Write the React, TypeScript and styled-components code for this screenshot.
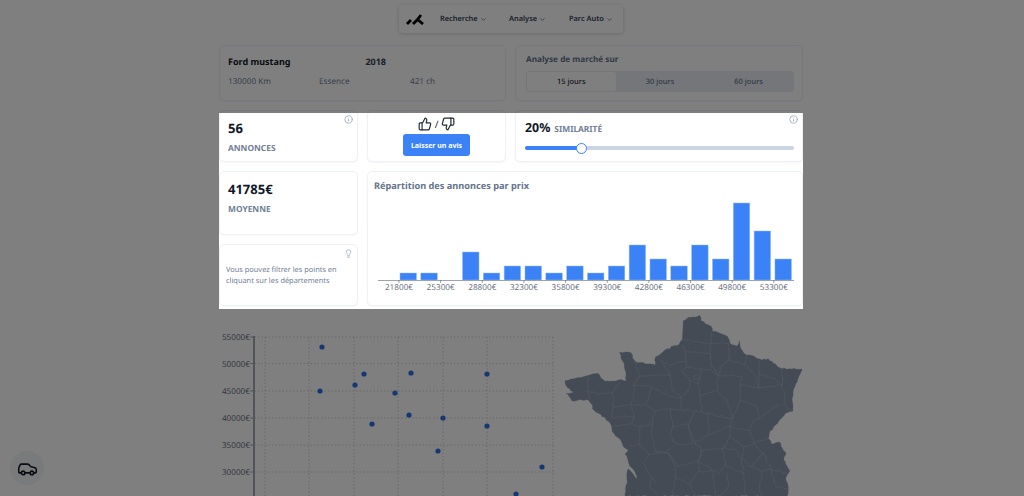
import React from 'react'
import styled, { createGlobalStyle } from 'styled-components'
import { Car, ChevronDown, Info, Lightbulb, ThumbsDown, ThumbsUp } from 'lucide-react'

const GlobalStyle = createGlobalStyle`
  html, body {
    margin: 0;
    height: 496px;
    overflow: hidden;
    background: #fff;
    font-family: 'Noto Sans', sans-serif;
    text-rendering: geometricPrecision;
  }
  * { box-sizing: border-box; }
`

const Page = styled.div`
  width: 1022px;
  height: 496px;
  overflow: hidden;
  padding-top: 5px;
`

const Nav = styled.nav`
  width: 224px;
  height: 28px;
  margin: 0 auto;
  padding: 0 7px;
  display: flex;
  align-items: center;
  background: #fff;
  border-radius: 4px;
  box-shadow: 0 1px 4px rgba(15, 23, 42, 0.18);
`

const NavItem = styled.div<{ $width: number }>`
  width: ${(p) => p.$width}px;
  display: flex;
  align-items: center;
  gap: 2px;
  font-size: 7.4px;
  font-weight: 600;
  color: #334155;
  white-space: nowrap;
`

const Content = styled.main`
  width: 584px;
  margin: 12px auto 0;
  display: flex;
  flex-direction: column;
  gap: 9px;
`

const TopRow = styled.section`
  display: grid;
  grid-template-columns: 287px 288px;
  gap: 9px;
`

const Card = styled.div`
  position: relative;
  background: #fff;
  border: 1px solid #eef1f6;
  border-radius: 5px;
  box-shadow: 0 1px 2px rgba(15, 23, 42, 0.04);
`

const CarCard = styled(Card)`
  height: 56px;
  padding: 9px 8px;
`

const CarTitleRow = styled.div`
  display: flex;
  font-size: 9px;
  font-weight: 700;
  line-height: 13px;
  color: #111827;
`

const CarYear = styled.span`
  margin-left: 75px;
  color: #334155;
`

const CarSpecs = styled.div`
  margin-top: 8px;
  display: grid;
  grid-template-columns: repeat(3, 91px);
  font-size: 8.2px;
  line-height: 12px;
  color: #718096;
`

const MarketCard = styled(Card)`
  height: 56px;
  padding: 8px 8px 8px 10px;
`

const CardHeading = styled.div<{ $size?: number }>`
  font-size: ${(p) => p.$size ?? 8.2}px;
  font-weight: 700;
  line-height: 12px;
  color: #64748b;
`

const Tabs = styled.div`
  margin-top: 5px;
  height: 21px;
  padding: 1px;
  display: grid;
  grid-template-columns: repeat(3, 1fr);
  background: #e9edf2;
  border-radius: 3px;
`

const Tab = styled.div<{ $active?: boolean }>`
  display: flex;
  align-items: center;
  justify-content: center;
  font-size: 7.5px;
  font-weight: 500;
  color: ${(p) => (p.$active ? '#1e293b' : '#64748b')};
  background: ${(p) => (p.$active ? '#fff' : 'transparent')};
  border-radius: 3px;
`

const MiddleGrid = styled.section`
  display: grid;
  grid-template-columns: 139px 139px 288px;
  grid-template-rows: 52px 64px 62px;
  gap: 9px;
`

const StatCard = styled(Card)`
  padding: 9px 8px;
`

const StatValue = styled.div`
  font-size: 13px;
  font-weight: 700;
  line-height: 16px;
  color: #111827;
`

const StatLabel = styled.div`
  margin-top: 7px;
  font-size: 8.4px;
  font-weight: 700;
  line-height: 12px;
  color: #718096;
`

const CornerIcon = styled.span`
  position: absolute;
  top: 4px;
  right: 4px;
  display: flex;
  color: #94a3b8;
`

const VoteCard = styled(Card)`
  display: flex;
  flex-direction: column;
  align-items: center;
  padding-top: 5px;
`

const Thumbs = styled.div`
  height: 15px;
  display: flex;
  align-items: center;
  gap: 3px;
  font-size: 10px;
  color: #1f2937;
`

const ReviewButton = styled.button`
  margin-top: 3px;
  width: 67px;
  height: 22px;
  padding: 0;
  border: 0;
  border-radius: 3px;
  background: #3b82f6;
  color: #fff;
  font-family: inherit;
  font-size: 7px;
  font-weight: 700;
`

const SimilarityCard = styled(Card)`
  padding: 8px 8px 8px 9px;
`

const SimilarityHead = styled.div`
  display: flex;
  align-items: baseline;
  gap: 4px;
`

const SimilarityValue = styled.span`
  font-size: 12.4px;
  font-weight: 700;
  line-height: 18px;
  color: #111827;
`

const SimilarityLabel = styled.span`
  font-size: 8.4px;
  font-weight: 700;
  color: #718096;
`

const SliderTrack = styled.div`
  position: relative;
  margin-top: 9px;
  height: 4px;
  border-radius: 2px;
  background: #cbd5e1;
`

const SliderFill = styled.div`
  height: 100%;
  border-radius: 2px;
  background: #3b82f6;
`

const SliderThumb = styled.span`
  position: absolute;
  top: -3.5px;
  width: 11px;
  height: 11px;
  margin-left: -5.5px;
  border-radius: 50%;
  background: #fff;
  border: 1px solid #3b82f6;
`

const ChartCard = styled(Card)`
  grid-column: 2 / 4;
  grid-row: 2 / 4;
  padding: 8px 6px 0;
`

const ChartSvg = styled.svg`
  display: block;
  margin-top: 3px;
`

const TipCard = styled(Card)`
  padding: 20px 6px 0;
  font-size: 7.4px;
  line-height: 11px;
  color: #718096;
`

const LowerRow = styled.section`
  display: flex;
  align-items: flex-start;
  margin-top: -5px;
`

const FloatingButton = styled.div`
  position: fixed;
  left: 10px;
  bottom: 11px;
  width: 34px;
  height: 34px;
  display: flex;
  align-items: center;
  justify-content: center;
  border-radius: 50%;
  background: #f3f4f6;
  color: #111827;
`

const Spotlight = styled.div`
  position: fixed;
  left: 219px;
  top: 113px;
  width: 584px;
  height: 196px;
  box-shadow: 0 0 0 1200px rgba(0, 0, 0, 0.5);
  pointer-events: none;
`

const bars = [1, 1, 0, 4, 1, 2, 2, 1, 2, 1, 2, 5, 3, 2, 5, 3, 11, 7, 3]
const priceLabels = [21800, 25300, 28800, 32300, 35800, 39300, 42800, 46300, 49800, 53300]

const Histogram = () => (
  <ChartSvg width="426" height="106" viewBox="0 0 426 106">
    {bars.map((value, i) =>
      value > 0 ? (
        <rect
          key={i}
          x={26 + i * 20.83}
          y={85 - value * 7}
          width={16.5}
          height={value * 7}
          fill="#3b82f6"
          stroke="#93bdfb"
          strokeWidth={0.5}
        />
      ) : null
    )}
    <line x1="4" x2="420" y1="85.5" y2="85.5" stroke="#9ca3af" strokeWidth="1" />
    {priceLabels.map((price, i) => (
      <g key={price}>
        <line x1={25 + i * 41.65} x2={25 + i * 41.65} y1="85" y2="88" stroke="#6b7280" strokeWidth="0.7" />
        <text
          x={25 + i * 41.65}
          y="95"
          textAnchor="middle"
          fontSize="8.2"
          fontFamily="'Noto Sans', sans-serif"
          fill="#6b7280"
        >
          {price}€
        </text>
      </g>
    ))}
  </ChartSvg>
)

const yTicks = [
  { label: '55000€', y: 27 },
  { label: '50000€', y: 53.5 },
  { label: '45000€', y: 81 },
  { label: '40000€', y: 108 },
  { label: '35000€', y: 135 },
  { label: '30000€', y: 162 },
]
const xGrid = [46, 90, 135, 179, 224, 268, 334]
const points = [
  [103, 37],
  [101, 81],
  [136, 75],
  [145, 64],
  [153, 114],
  [176, 83],
  [192, 63],
  [190, 105],
  [224, 108],
  [219, 141],
  [268, 64],
  [268, 116],
  [323, 157],
  [297, 184],
]

const Scatter = () => (
  <svg width="336" height="186" viewBox="0 0 336 186" style={{ flex: 'none' }}>
    {yTicks.map((tick) => (
      <g key={tick.label}>
        <line x1="32" x2="334" y1={tick.y} y2={tick.y} stroke="#c4c4c4" strokeWidth="0.8" strokeDasharray="1.5 2" />
        <line x1="31" x2="36" y1={tick.y} y2={tick.y} stroke="#9ca3af" strokeWidth="0.8" />
        <text x="31" y={tick.y + 3} textAnchor="end" fontSize="8.2" fontFamily="'Noto Sans', sans-serif" fill="#6b7280">
          {tick.label}
        </text>
      </g>
    ))}
    {xGrid.map((x) => (
      <line key={x} x1={x} x2={x} y1="27" y2="186" stroke="#c4c4c4" strokeWidth="0.8" strokeDasharray="1.5 2" />
    ))}
    <line x1="35" x2="35" y1="26" y2="186" stroke="#a3a8b0" strokeWidth="2" />
    {points.map(([x, y]) => (
      <circle key={`${x}-${y}`} cx={x} cy={y} r="2.6" fill="#2f6fe0" />
    ))}
  </svg>
)

const franceOutline =
  'M385 32 L400 22 L420 22 L433 16 L438 32 L452 42 L468 48 L472 64 L495 70 L518 80 L525 100 L545 108 L553 92 L558 116 L575 135 L600 140 L620 150 L640 146 L655 160 L680 176 L741 177 L732 198 L722 222 L714 248 L712 275 L714 303 L692 310 L682 322 L668 340 L646 362 L640 385 L650 402 L672 396 L682 415 L693 432 L686 450 L696 468 L705 482 L692 505 L700 535 L696 558 L210 558 L216 510 L219 476 L246 506 L240 486 L224 468 L210 432 L220 420 L205 410 L196 388 L172 366 L170 350 L150 322 L118 302 L100 270 L70 270 L50 272 L34 250 L56 246 L36 232 L30 212 L62 205 L100 196 L128 190 L150 214 L190 210 L214 212 L208 170 L193 126 L228 128 L240 154 L300 166 L302 140 L330 120 L372 104 L382 88 Z'

const departments = [
  'M381 88 L410 92 L432 98 L465 102 L495 100 L520 100',
  'M382 104 L392 126 L430 128 L465 132 L466 102 L470 66',
  'M392 126 L392 150 L394 172 L430 178 L466 180 L490 196',
  'M466 132 L468 168 L490 196',
  'M520 100 L522 130 L520 150 L570 166 L574 135',
  'M520 150 L496 172 L490 196 L486 222 L486 240',
  'M574 166 L600 198 L610 234 L612 190 L610 150',
  'M612 190 L650 205 L682 226 L680 176',
  'M490 196 L560 200 L556 224 L610 234 L618 232 L682 226 L690 262 L686 284 L712 305',
  'M316 150 L345 166 L392 152',
  'M240 154 L252 200 L345 194 L320 152',
  'M345 194 L350 238 L378 262 L402 240 L404 210 L380 182 L394 172',
  'M404 210 L430 220 L438 180 M430 220 L434 258 L486 240',
  'M252 200 L236 224 L235 268 L226 284 L176 292',
  'M100 196 L96 244 L106 266 M96 244 L130 252 L172 248 L176 292 L170 322',
  'M172 248 L195 214',
  'M236 224 L290 232 L345 260 L378 262 L380 300 L440 305 L458 310 L532 326 L555 270 L606 290 L612 326',
  'M290 232 L272 286 L300 304 L345 296 L380 300',
  'M226 284 L272 286 M226 284 L238 318 L226 342 L254 350 L292 342 L300 304',
  'M170 322 L240 320 M170 350 L226 342',
  'M486 240 L516 276 L532 326 L524 350 L584 362 L596 330 L612 326 L672 280',
  'M434 258 L440 305 M556 224 L555 270',
  'M458 310 L462 374 L420 398 L400 350 L418 306',
  'M345 296 L352 352 L400 340 L400 350 L412 402 L366 404 L346 380 L352 352',
  'M292 342 L290 376 L302 426 L334 428 L356 406',
  'M254 350 L252 404 L222 410 M252 404 L282 432 L264 460 L290 500 L300 520',
  'M462 374 L524 350 L524 380 L506 414 L440 420 L420 398',
  'M584 362 L596 400 L640 385 M524 380 L566 410 L596 400 L626 430 L646 476 L700 490',
  'M566 410 L560 446 L586 470 L626 430 M506 414 L540 418 L560 446 L566 490 L510 466 L504 416',
  'M340 430 L368 470 L430 454 L440 420 L430 454 L490 490 L510 466',
  'M282 432 L334 428 L340 430 L360 470 L360 500 L404 524 L430 486 L430 454',
  'M290 500 L284 530 L310 558 M360 500 L352 558 M404 524 L420 558 M430 486 L474 484 L480 558',
  'M566 490 L570 558 M586 470 L620 484 L646 476 M620 484 L614 530 L620 558 M646 476 L664 530 L700 535',
  'M516 490 L520 530 L500 558',
  'M415 200 L425 192 L436 200 L430 210 L418 208 Z',
]

// breaks every straight piece into short ones so borders look like real ones
const roughen = (d: string, amount: number) => {
  let seed = 7
  const next = () => {
    seed = (seed * 16807) % 2147483647
    return (seed % 1000) / 1000 - 0.5
  }
  const parts = d.match(/[MLZ][^MLZ]*/g) ?? []
  let px = 0
  let py = 0
  return parts
    .map((part) => {
      if (part[0] === 'Z') return 'Z'
      const [x, y] = part.slice(1).trim().split(' ').map(Number)
      let out = ''
      if (part[0] === 'L') {
        const steps = Math.max(1, Math.round(Math.hypot(x - px, y - py) / 8))
        for (let i = 1; i < steps; i++) {
          const t = i / steps
          out += `L${(px + (x - px) * t + next() * amount).toFixed(1)} ${(py + (y - py) * t + next() * amount).toFixed(1)} `
        }
      }
      px = x
      py = y
      return `${out}${part[0]}${x} ${y}`
    })
    .join(' ')
}

const FranceMap = () => (
  <svg width="248" height="186" viewBox="0 0 744 558" style={{ flex: 'none' }}>
    <path d={roughen(franceOutline, 5)} fill="#8a97ab" stroke="#8a97ab" strokeWidth="1" strokeLinejoin="round" />
    {departments.map((d) => (
      <path key={d} d={roughen(d, 6)} fill="none" stroke="#b8c1cf" strokeWidth="1.2" strokeLinejoin="round" />
    ))}
  </svg>
)

const Logo = () => (
  <svg width="18" height="12" viewBox="0 0 18 12" fill="none" stroke="#000" strokeWidth="2.8" style={{ marginRight: 16 }}>
    <path d="M1 11 L5 7" />
    <path d="M7 11 L11 7 L15 2" />
    <path d="M11 6 L17 11" />
  </svg>
)

export default function App() {
  return (
    <Page>
      <GlobalStyle />
      <Nav>
        <Logo />
        <NavItem $width={69}>
          Recherche <ChevronDown size={7} />
        </NavItem>
        <NavItem $width={60}>
          Analyse <ChevronDown size={7} />
        </NavItem>
        <NavItem $width={45}>
          Parc Auto <ChevronDown size={7} />
        </NavItem>
      </Nav>

      <Content>
        <TopRow>
          <CarCard>
            <CarTitleRow>
              Ford mustang
              <CarYear>2018</CarYear>
            </CarTitleRow>
            <CarSpecs>
              <span>130000 Km</span>
              <span>Essence</span>
              <span>421 ch</span>
            </CarSpecs>
          </CarCard>
          <MarketCard>
            <CardHeading>Analyse de marché sur</CardHeading>
            <Tabs>
              <Tab $active>15 jours</Tab>
              <Tab>30 jours</Tab>
              <Tab>60 jours</Tab>
            </Tabs>
          </MarketCard>
        </TopRow>

        <MiddleGrid>
          <StatCard>
            <StatValue>56</StatValue>
            <StatLabel>ANNONCES</StatLabel>
            <CornerIcon>
              <Info size={9} />
            </CornerIcon>
          </StatCard>
          <VoteCard>
            <Thumbs>
              <ThumbsUp size={14} />/<ThumbsDown size={14} />
            </Thumbs>
            <ReviewButton>Laisser un avis</ReviewButton>
          </VoteCard>
          <SimilarityCard>
            <SimilarityHead>
              <SimilarityValue>20%</SimilarityValue>
              <SimilarityLabel>SIMILARITÉ</SimilarityLabel>
            </SimilarityHead>
            <SliderTrack>
              <SliderFill style={{ width: '21%' }} />
              <SliderThumb style={{ left: '21%' }} />
            </SliderTrack>
            <CornerIcon>
              <Info size={9} />
            </CornerIcon>
          </SimilarityCard>

          <StatCard>
            <StatValue>41785€</StatValue>
            <StatLabel>MOYENNE</StatLabel>
          </StatCard>
          <ChartCard>
            <CardHeading $size={9.2}>Répartition des annonces par prix</CardHeading>
            <Histogram />
          </ChartCard>
          <TipCard>
            Vous pouvez filtrer les points en cliquant sur les départements
            <CornerIcon>
              <Lightbulb size={9} />
            </CornerIcon>
          </TipCard>
        </MiddleGrid>

        <LowerRow>
          <Scatter />
          <FranceMap />
        </LowerRow>
      </Content>

      <FloatingButton>
        <Car size={21} strokeWidth={1.8} />
      </FloatingButton>
      <Spotlight />
    </Page>
  )
}
